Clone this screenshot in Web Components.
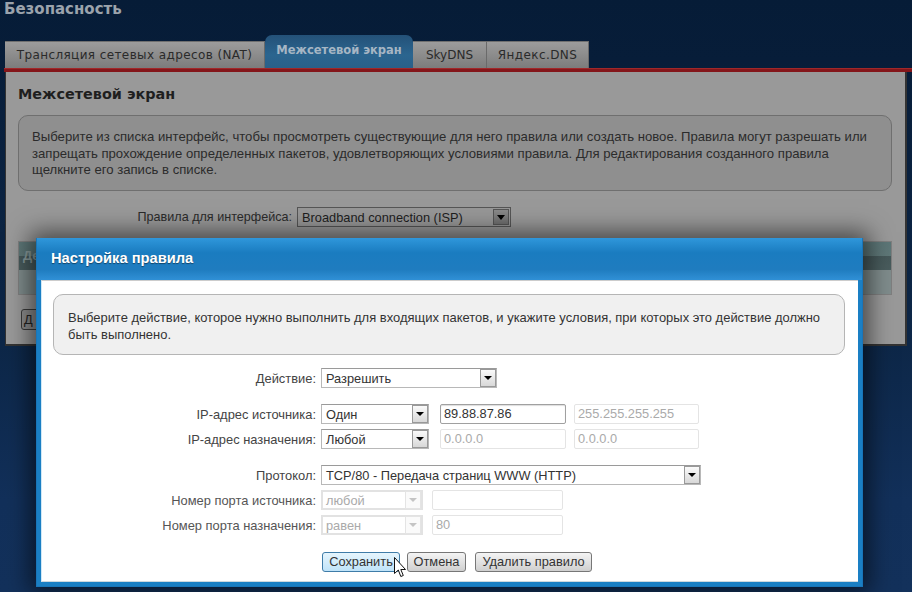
<!DOCTYPE html>
<html lang="ru"><head><meta charset="utf-8"><title>Настройка правила</title>
<style>
html,body{margin:0;padding:0;height:592px;overflow:hidden}
body{background:linear-gradient(#061c37 0,#071d39 60px,#0d2748 345px,#12305a 500px,#13315b 100%);font:13px "Liberation Sans",Arial,sans-serif;color:#333}
</style></head><body>
<fw-page>
  <span slot="title">Безопасность</span>
  <fw-tab slot="tabs" style="width:260px;letter-spacing:.4px">Трансляция сетевых адресов (NAT)</fw-tab>
  <fw-tab slot="tabs" active style="width:148px">Межсетевой экран</fw-tab>
  <fw-tab slot="tabs" style="width:74px">SkyDNS</fw-tab>
  <fw-tab slot="tabs" style="width:102px;letter-spacing:.4px">Яндекс.DNS</fw-tab>
  <fw-panel></fw-panel>
</fw-page>
<fw-modal>
  <span slot="title">Настройка правила</span>
  <fw-note>Выберите действие, которое нужно выполнить для входящих пакетов, и укажите условия, при которых это действие должно быть выполнено.</fw-note>
  <fw-row label="Действие:" style="margin-top:13px"><fw-select w="176">Разрешить</fw-select></fw-row>
  <fw-row label="IP-адрес источника:" style="margin-top:16px"><fw-select w="108">Один</fw-select><fw-input w="126" style="margin-left:11px" active>89.88.87.86</fw-input><fw-input w="125" style="margin-left:8px" off>255.255.255.255</fw-input></fw-row>
  <fw-row label="IP-адрес назначения:" style="margin-top:5px"><fw-select w="108">Любой</fw-select><fw-input w="126" style="margin-left:11px" off>0.0.0.0</fw-input><fw-input w="125" style="margin-left:8px" off>0.0.0.0</fw-input></fw-row>
  <fw-row label="Протокол:" style="margin-top:16px"><fw-select w="380">TCP/80 - Передача страниц WWW (HTTP)</fw-select></fw-row>
  <fw-row label="Номер порта источника:" dim style="margin-top:5px"><fw-select w="102" off>любой</fw-select><fw-input w="131" style="margin-left:9px" off></fw-input></fw-row>
  <fw-row label="Номер порта назначения:" dim style="margin-top:5px"><fw-select w="102" off>равен</fw-select><fw-input w="131" style="margin-left:9px" off>80</fw-input></fw-row>
  <fw-actions>
    <fw-btn primary style="width:78px">Сохранить</fw-btn>
    <fw-btn style="width:59px;margin-left:7px">Отмена</fw-btn>
    <fw-btn style="width:117px;margin-left:9px">Удалить правило</fw-btn>
  </fw-actions>
</fw-modal>
<fw-cursor></fw-cursor>
<script>
function def(name,html){
  customElements.define(name,class extends HTMLElement{
    connectedCallback(){
      if(this.shadowRoot)return;
      const r=this.attachShadow({mode:'open'});
      r.innerHTML=typeof html==='function'?html(this):html;
    }
  });
}
const UI='"DejaVu Sans",Verdana,sans-serif', AR='"Liberation Sans",Arial,sans-serif';
def('fw-page',`<style>
:host{display:block;width:912px}
.t{height:35px;padding:1px 0 0 4px;box-sizing:border-box;font:bold 15px/17px ${UI};color:#9ba3ac}
.tabs{display:flex;align-items:flex-end;height:33px;padding-left:5px;box-sizing:border-box}
.bar{height:4px;background:#84161a;border-top:1px solid #a0282a;box-sizing:border-box;margin-left:4px}
</style><div class="t"><slot name="title"></slot></div><div class="tabs"><slot name="tabs"></slot></div><div class="bar"></div><slot></slot>`);
def('fw-tab',e=>`<style>
:host{display:block;box-sizing:border-box;flex:none;text-align:center;font:12px/1 ${UI};
${e.hasAttribute('active')?'height:33px;padding-top:10px;background:linear-gradient(#245178,#2b658f 60%,#2a6089);border-radius:7px 7px 0 0;color:#a6b6c4;font-weight:bold;font-size:11.5px':'height:27px;padding-top:7px;background:linear-gradient(#9c9c9c,#7c7c7c);border-top:1px solid #6f6f6f;border-right:1px solid #6a6a6a;color:#2a2a2a'}}
</style><slot></slot>`);
def('fw-panel',`<style>
:host{display:block;box-sizing:border-box;width:902px;height:274px;margin-left:5px;background:#999;border:solid #333;border-width:0 2px 2px 1px;padding:0 13px 0 12px;color:#222}
h2{margin:0;padding-top:14px;height:43px;box-sizing:border-box;font:bold 14.4px/17px ${UI};color:#1f1f1f}
.info{height:76px;box-sizing:border-box;border:1px solid #6f6f6f;border-radius:10px;background:#8f8f8f;padding:13px 12px 0 13px;font:13.15px/16.6px ${AR};color:#2b2b2b}
.l{display:flex;align-items:center;height:20px;margin-top:16px;font:12.6px ${AR};color:#2b2b2b}
.l b{font-weight:normal;width:274px;text-align:right;flex:none}
.s{margin-left:5px;width:214px;height:20px;box-sizing:border-box;border:1px solid #555;background:#979797;padding-left:4px;display:flex;align-items:center;justify-content:space-between;padding-right:1px;color:#1e1e1e;font-size:12.8px}
.a{width:16px;height:16px;background:linear-gradient(#8a8a8a,#6e6e6e);border:1px solid #555;box-sizing:border-box;display:flex;align-items:center;justify-content:center}
.a i{border:4px solid transparent;border-top:5px solid #000;border-bottom:0}
.tb{margin-top:14px;height:54px;box-sizing:border-box;border:1px solid #7f7f7f;background:linear-gradient(#5c7677 0,#5f7878 14px,#46595a 14px,#4a5d5e 28px,#7f8c8c 28px);padding:6px 0 0 4px;font:bold 12.8px/16px ${AR};color:#8a9c9c}
.d{display:block;margin:14px 0 0 3px;width:60px;height:21px;box-sizing:border-box;border:1px solid #3a3a3a;border-radius:3px;background:#8c8c8c;font:12.8px/19px ${AR};color:#222;padding-left:2px}
</style><h2>Межсетевой экран</h2>
<div class="info">Выберите из списка интерфейс, чтобы просмотреть существующие для него правила или создать новое. Правила могут разрешать или запрещать прохождение определенных пакетов, удовлетворяющих условиями правила. Для редактирования созданного правила щелкните его запись в списке.</div>
<div class="l"><b>Правила для интерфейса:</b><div class="s">Broadband connection (ISP)<span class="a"><i></i></span></div></div>
<div class="tb">Де</div><span class="d">Д</span>`);
def('fw-modal',`<style>
:host{position:absolute;left:36px;top:238px;width:827px;height:349px;box-sizing:border-box;background:#1a7fc4;border:solid #1975b8;border-width:0 1px 1px 1px;box-shadow:0 0 22px 6px rgba(0,0,0,.55);display:flex;flex-direction:column}
.h{height:42px;flex:none;box-sizing:border-box;padding:12px 0 0 14px;background:linear-gradient(#2f97db,#1a7cc0 35%,#1f7cbf 75%,#3090d6);font:bold 14.7px/17px ${AR};color:#fff;text-shadow:0 1px 1px rgba(0,0,0,.45)}
.b{flex:1;margin:0 4px 4px;background:#fff;border-top:1px solid #ccc;border-left:1px solid #d0e8f6;border-bottom:1px solid #cfd8de;padding:13px 13px 0 11px;box-sizing:border-box;min-height:0}
</style><div class="h"><slot name="title"></slot></div><div class="b"><slot></slot></div>`);
def('fw-note',`<style>
:host{display:block;box-sizing:border-box;width:792px;height:61px;background:#f0f0f0;border:1px solid #b5b5b5;border-radius:10px;padding:15px 14px 0;font:12.96px/16.5px ${AR};color:#333}
</style><slot></slot>`);
def('fw-row',e=>`<style>
:host{display:flex;align-items:center;height:20px;font:12.9px ${AR};color:${e.hasAttribute('dim')?'#555':'#444'}}
.l{width:263px;margin-right:5px;flex:none;text-align:right;white-space:nowrap}
</style><span class="l">${e.getAttribute('label')}</span><slot></slot>`);
def('fw-select',e=>{const off=e.hasAttribute('off');return `<style>
:host{display:flex;align-items:center;justify-content:space-between;box-sizing:border-box;width:${e.getAttribute('w')}px;height:20px;flex:none;border:${off?'2px solid #e2e2e2':'1px solid #b8b8b8'};${off?'':'border-top-color:#9a9a9a;'}padding:0 0 0 ${off?3:4}px;background:#fff;font:12.8px ${AR};color:${off?'#aaa':'#333'}}
.a{width:16px;height:18px;box-sizing:border-box;border:1px solid ${off?'#e4e4e4':'#999'};background:${off?'#fafafa':'linear-gradient(#fafafa,#d8d8d8)'};display:flex;align-items:center;justify-content:center}
i{display:block;border:4px solid transparent;border-top:4px solid ${off?'#c4c4c4':'#000'};border-bottom:0}
</style><slot></slot><span class="a"><i></i></span>`});
def('fw-input',e=>{const off=e.hasAttribute('off');return `<style>
:host{display:block;box-sizing:border-box;width:${e.getAttribute('w')}px;height:20px;flex:none;border:1px solid ${off?'#e4e4e4':'#a0a0a0'};border-radius:2px;padding:0 3px;font:12.8px/18px ${AR};color:${off?'#aaa':'#333'};${e.hasAttribute('active')?'box-shadow:inset 0 1px 1px #ddd;':''}}
</style><slot></slot>`});
def('fw-actions',`<style>:host{display:flex;margin:17px 0 0 269px;height:20px}</style><slot></slot>`);
def('fw-btn',e=>`<style>
:host{display:block;box-sizing:border-box;flex:none;height:20px;text-align:center;font:12.8px/18px ${AR};color:#333;border-radius:3px;white-space:nowrap;
${e.hasAttribute('primary')?'border:1px solid #3f7ca8;background:linear-gradient(#e6f5fd,#bfe3f9);':'border:1px solid #777;background:linear-gradient(#f4f4f4,#cfcfcf);'}}
</style><slot></slot>`);
def('fw-cursor',`<style>:host{position:absolute;left:394px;top:557px;width:13px;height:21px;display:block}svg{display:block}</style>
<svg width="13" height="21" viewBox="0 0 13 21"><path d="M.5.5V16.500L4.300 13 6.800 19.500 9.300 18.500 6.800 12.500H11.500Z" fill="#fff" stroke="#111"/></svg>`);
</script>
</body></html>
